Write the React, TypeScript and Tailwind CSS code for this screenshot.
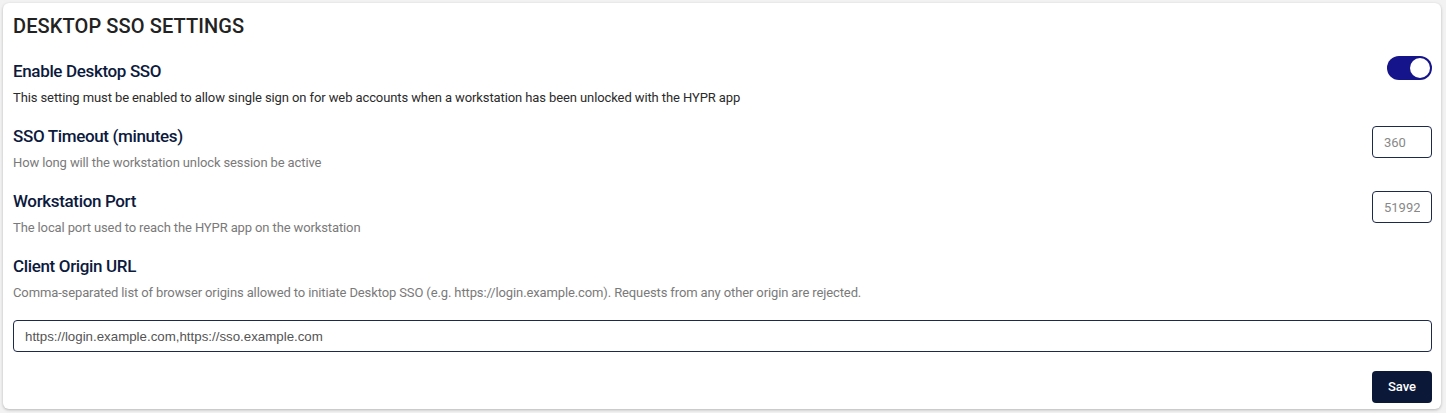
const fields = [
  {
    title: 'SSO Timeout (minutes)',
    desc: 'How long will the workstation unlock session be active',
    value: '360',
  },
  {
    title: 'Workstation Port',
    desc: 'The local port used to reach the HYPR app on the workstation',
    value: '51992',
  },
];

export default function App() {
  return (
    <div className="h-[413px] w-full bg-[#f2f2f2] p-[3px] pr-[5px] font-['Roboto',sans-serif]">
      <div className="h-[406px] rounded-md bg-white pl-[10px] pr-[9px] pt-[9px] shadow-[0_1px_3px_rgba(0,0,0,0.25)]">
        <h1 className="text-[20px] font-medium leading-[28px] tracking-[0.1px] text-[#222]">
          DESKTOP SSO SETTINGS
        </h1>

        {/* Enable toggle */}
        <div className="mt-[20px] flex items-start justify-between">
          <div>
            <h2 className="text-[17px] font-medium leading-[22px] tracking-[-0.35px] text-[#0c1a3d]">Enable Desktop SSO</h2>
            <p className="mt-[7px] text-[13px] leading-[18px] tracking-[-0.1px] text-[#2b2b2b]">
              This setting must be enabled to allow single sign on for web accounts when a workstation has been unlocked with the HYPR app
            </p>
          </div>
          <button className="mt-[-4px] flex h-[24px] w-[45px] items-center justify-end rounded-full bg-[#16148a] px-[2px]">
            <span className="h-[20px] w-[20px] rounded-full bg-white" />
          </button>
        </div>

        {fields.map((f) => (
          <div key={f.title} className="mt-[18px] flex items-start justify-between">
            <div>
              <h2 className="text-[17px] font-medium leading-[22px] tracking-[-0.35px] text-[#0c1a3d]">{f.title}</h2>
              <p className="mt-[7px] text-[13px] leading-[18px] tracking-[-0.12px] text-[#7a7a7a]">{f.desc}</p>
            </div>
            <input
              readOnly
              value={f.value}
              className="mt-[1px] h-[32px] w-[60px] rounded-[4px] border border-[#1e2a4a] px-[11px] text-[13px] text-[#888] outline-none"
            />
          </div>
        ))}

        <div className="mt-[18px]">
          <h2 className="text-[17px] font-medium leading-[22px] tracking-[-0.35px] text-[#0c1a3d]">Client Origin URL</h2>
          <p className="mt-[7px] text-[13px] leading-[18px] tracking-[-0.12px] text-[#7a7a7a]">
            Comma-separated list of browser origins allowed to initiate Desktop SSO (e.g. https://login.example.com). Requests from any other origin are rejected.
          </p>
          <input
            readOnly
            value="https://login.example.com,https://sso.example.com"
            className="mt-[18px] h-[32px] w-full rounded-[4px] border border-[#1e2a4a] px-[11px] font-['Liberation_Sans',sans-serif] text-[13.3px] text-[#555] outline-none"
          />
        </div>

        <div className="mt-[19px] flex justify-end">
          <button className="h-[32px] w-[60px] rounded-[4px] bg-[#0b1838] text-[13px] font-medium text-white">
            Save
          </button>
        </div>
      </div>
    </div>
  );
}
